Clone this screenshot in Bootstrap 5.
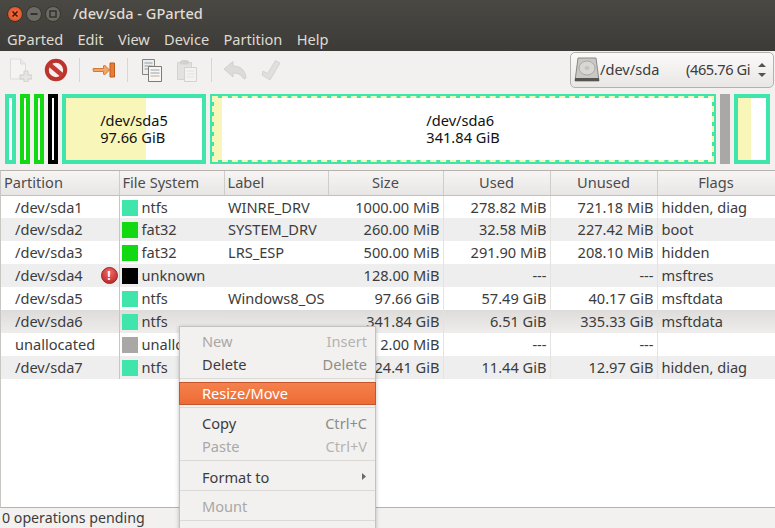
<!DOCTYPE html>
<html lang="en">
<head>
    <meta charset="UTF-8">
    <meta name="viewport" content="width=device-width, initial-scale=1.0">
    <title>/dev/sda - GParted</title>
    <link href="https://cdn.jsdelivr.net/npm/bootstrap@5.3.2/dist/css/bootstrap.min.css" rel="stylesheet">
    <style>
        html, body { height: 528px; overflow: hidden; }
        body { width: 775px; background: #f2f1f0; color: #3c3c3c; font-family: "Noto Sans", sans-serif; font-size: 14.6px; position: relative; }
        .app-top { background: linear-gradient(#4a4843, #3c3b37); color: #dfdbd2; }
        .title-row { height: 28px; padding-left: 7px; gap: 3px; }
        .win-btn { width: 16px; height: 16px; border-radius: 50%; background: #6d6a63; border: 1px solid #37352f; }
        .win-btn.win-close { background: radial-gradient(#f6764a, #d8491d); }
        .win-ico { display: block; }
        .win-title { margin-left: 9px; font-weight: 500; color: #e0dcd3; font-size: 14.6px; }
        .menu-row { height: 23px; padding-left: 7px; gap: 14.3px; color: #dfdbd2; font-size: 14.6px; line-height: 22px; }
        .tool-row { height: 37px; background: #f2f1f0; padding-left: 8px; gap: 11.5px; }
        .tool-ico { width: 24px; height: 24px; }
        .tool-sep { width: 1px; height: 24px; background: #d9d7d4; }
        .disk-pick { position: absolute; left: 570px; top: 52px; width: 204px; height: 36px; border: 1px solid #b5b2ac; border-radius: 5px; background: linear-gradient(#fbfafa, #e9e7e5); color: #3c3c3c; padding-left: 3px; white-space: nowrap; overflow: hidden; }
        .disk-size { position: absolute; left: 115px; letter-spacing: -.4px; }
        .disk-arrows { position: absolute; right: 0; top: 0; bottom: 0; width: 22px; }
        .map-row { height: 82px; padding: 6px 5px 0 5px; gap: 4px; background: #f2f1f0; }
        .part-box { height: 70px; border: 4px solid #40e5ac; background: #fff; position: relative; color: #111; line-height: 17px; font-size: 14.6px; }
        .part-box.is-green { border-color: #13d913; }
        .part-box.is-black { border-color: #000; }
        .part-box.is-free { border: 0; background: #a9a8a6; }
        .part-fill { position: absolute; left: 0; top: 0; bottom: 0; background: #f8f6b8; }
        .part-text { position: relative; padding-top: 14px; }
        .sel-dash { position: absolute; inset: -2px; border: 2px dashed #f8f6b8; }
        .list-wrap { height: 338px; background: #fff; border-top: 1px solid #b5b2ac; border-bottom: 1px solid #b5b2ac; border-left: 1px solid #c8c6c3; }
        .part-table { table-layout: fixed; width: 774px; margin: 0; font-size: 14.6px; color: #3c3c3c; }
        .part-table th { height: 24px; background: linear-gradient(#f6f5f4, #e8e6e4); font-weight: 400; color: #4c4c4c; padding: 0 0 3px 3px; border-right: 1px solid #cfcdca; border-bottom: 1px solid #c3c1be; line-height: 20px; }
        .part-table th.mid { text-align: center; padding: 0 0 3px; }
        .part-table td { height: 23px; padding: 0 3px 0 4px; line-height: 22px; border: 0; white-space: nowrap; overflow: hidden; background: transparent; }
        .part-table td.name { padding-left: 14px; border-right: 1px solid #c8c6c3; position: relative; overflow: visible; }
        .part-table td.num { text-align: right; border-right: 1px solid #e4e3e1; }
        .part-table tr.alt td { background: #eeeeee; }
        .part-table tr.sel td { background: linear-gradient(#dddcda, #eeedec); }
        .fs-swatch { display: inline-block; width: 16px; height: 16px; vertical-align: -3px; margin-right: 4px; margin-left: -2px; }
        .warn-dot { position: absolute; right: 1px; top: 3px; width: 17px; height: 17px; border-radius: 50%; background: radial-gradient(circle at 50% 30%, #f26a6a, #b01d1d); border: 1px solid #a82222; color: #fff; font-size: 12px; font-weight: 700; text-align: center; line-height: 15px; }
        .ctx-menu { position: absolute; left: 179px; top: 326px; width: 197px; height: 210px; padding-top: 3px; background: #f2f1f0; border: 1px solid #c4c2bf; box-shadow: 0 1px 4px rgba(0,0,0,.25); z-index: 5; }
        .ctx-item { height: 23px; padding: 0 8px 0 22px; line-height: 22px; color: #3c3c3c; white-space: nowrap; }
        .ctx-item.off { color: #a9a8a5; }
        .ctx-key { color: #8e8c88; }
        .ctx-item.off .ctx-key { color: #b5b3b0; }
        .ctx-line { height: 1px; background: #dcdad7; margin: 2px 0 4px; }
        .ctx-item.hot { background: linear-gradient(#f4814c, #ee6b35); color: #fff; border: 1px solid #c4552a; margin: -1px -1px 1px; padding-left: 22px; line-height: 21px; }
        .status-row { position: absolute; left: 0; right: 0; top: 508px; height: 20px; padding-left: 2px; line-height: 19px; font-size: 14.2px; background: #f2f1f0; color: #3c3c3c; }
    </style>
</head>
<body>
    <div class="app-top">
        <div class="title-row d-flex align-items-center">
            <span class="win-btn win-close"><svg class="win-ico" width="14" height="14" viewBox="0 0 14 14"><path d="M4.5 4.5l5 5M9.5 4.5l-5 5" stroke="#4a1606" stroke-width="1.6"/></svg></span>
            <span class="win-btn"><svg class="win-ico" width="14" height="14" viewBox="0 0 14 14"><path d="M3.5 7h7" stroke="#35332e" stroke-width="2"/></svg></span>
            <span class="win-btn"><svg class="win-ico" width="14" height="14" viewBox="0 0 14 14"><rect x="4" y="4" width="6" height="6" fill="none" stroke="#35332e" stroke-width="1.5"/></svg></span>
            <span class="win-title">/dev/sda - GParted</span>
        </div>
        <div class="menu-row d-flex">
            <span>GParted</span><span>Edit</span><span>View</span><span>Device</span><span>Partition</span><span>Help</span>
        </div>
    </div>

    <div class="tool-row d-flex align-items-center">
        <svg class="tool-ico" viewBox="0 0 24 24"><path d="M2.5 1h10l5 5v15h-15z" fill="#f4f4f3" stroke="#dedddb"/><path d="M12.5 1v5h5" fill="#e8e7e5" stroke="#dedddb"/><path d="M16 13h4v4h4v4h-4v3h-4v-3h-4v-4h4z" fill="#e6e5e3" stroke="#cfcecc"/></svg>
        <svg class="tool-ico" viewBox="0 0 24 24"><circle cx="12" cy="12" r="9.2" fill="#f7eeee" stroke="#bb332c" stroke-width="4"/><path d="M5.5 6.5l13 11" stroke="#c33a32" stroke-width="4.5"/></svg>
        <span class="tool-sep"></span>
        <svg class="tool-ico" viewBox="0 0 24 24"><path d="M1.5 10.5h10V8l1-1 5 5-5 5-1-1v-2.500h-10q-1-2 0-3.500z" fill="#f3a563" stroke="#cf7a36"/><path d="M18 5h4.500v14H18z" fill="#ea7d33" stroke="#bd5b1f"/></svg>
        <span class="tool-sep"></span>
        <svg class="tool-ico" viewBox="0 0 24 24"><path d="M2.500 1.500h12v15h-12z" fill="#ededec" stroke="#85847f"/><path d="M4.500 5h8M4.500 8h8M4.500 11h8" stroke="#8f9cb0"/><path d="M8.500 8.500h13v15h-13z" fill="#f6f6f5" stroke="#7c7b76"/><path d="M10.500 12h9M10.500 15h9" stroke="#9aa0a8"/><path d="M10.500 18h9" stroke="#c4a890"/></svg>
        <svg class="tool-ico" viewBox="0 0 24 24"><path d="M2.500 4.500h14v17h-14z" fill="#e3e2e0" stroke="#d3d2cf"/><path d="M6.500 2h6v1h1.500v3.500h-9V3h1.500z" fill="#d2d1ce"/><path d="M9.500 9.500h12v14h-12z" fill="#f4f3f2" stroke="#d3d2cf"/><path d="M11.500 13h8M11.500 16h8M11.500 19h8" stroke="#e3e2e0"/></svg>
        <span class="tool-sep"></span>
        <svg class="tool-ico" viewBox="0 0 24 24"><path d="M1 11l9-7.500v4.500c7 0 12 3.500 13 11.500 0 1.500-2 2-3 .5-2-3.500-5-5-10-5v4z" fill="#dcdbd9" stroke="#d2d1cf"/></svg>
        <svg class="tool-ico" viewBox="0 0 24 24"><path d="M4 13l4.500 2.500L16.500 2.500 21 5l-10 17-8-5z" fill="#e0dfdd" stroke="#d5d4d2"/></svg>
    </div>
    <div class="disk-pick d-flex align-items-center">
        <svg width="26" height="26" viewBox="0 0 26 26"><path d="M4 1h18l3 23H1z" fill="#c9c8c5" stroke="#8a8986"/><ellipse cx="13" cy="11" rx="8" ry="7" fill="#d8d7d4" stroke="#aaa9a6"/><ellipse cx="13" cy="11" rx="2.500" ry="2" fill="#c4c3c0"/><path d="M1 21h24v3H1z" fill="#55544f"/></svg>
        <span>/dev/sda</span>
        <span class="disk-size">(465.76 Gi</span>
        <span class="disk-arrows"><svg width="22" height="34" viewBox="0 0 22 34"><path d="M7 14l4-4 4 4zM7 20l4 4 4-4z" fill="#55534f"/></svg></span>
    </div>

    <div class="map-row d-flex">
        <div class="part-box" style="width:11px"></div>
        <div class="part-box is-green" style="width:10px"></div>
        <div class="part-box is-green" style="width:10px"></div>
        <div class="part-box is-black" style="width:10px"></div>
        <div class="part-box d-flex justify-content-center" style="width:144px">
            <div class="part-fill" style="width:80px"></div>
            <div class="part-text">/dev/sda5<br>97.66 GiB</div>
        </div>
        <div class="part-box d-flex justify-content-center" style="width:506px">
            <div class="part-fill" style="width:8px"></div>
            <div class="sel-dash"></div>
            <div class="part-text">/dev/sda6<br>341.84 GiB</div>
        </div>
        <div class="part-box is-free" style="width:10px"></div>
        <div class="part-box" style="width:36px">
            <div class="part-fill" style="width:13px"></div>
        </div>
    </div>

    <div class="list-wrap">
        <table class="table part-table">
            <colgroup>
                <col style="width:118px"><col style="width:105px"><col style="width:104px"><col style="width:115px"><col style="width:107px"><col style="width:107px"><col style="width:118px">
            </colgroup>
            <thead>
                <tr><th>Partition</th><th>File System</th><th>Label</th><th class="mid">Size</th><th class="mid">Used</th><th class="mid">Unused</th><th class="mid">Flags</th></tr>
            </thead>
            <tbody id="rows"></tbody>
        </table>
    </div>

    <div class="ctx-menu">
        <div class="ctx-item off d-flex justify-content-between"><span>New</span><span class="ctx-key">Insert</span></div>
        <div class="ctx-item d-flex justify-content-between"><span>Delete</span><span class="ctx-key">Delete</span></div>
        <div class="ctx-line"></div>
        <div class="ctx-item hot">Resize/Move</div>
        <div class="ctx-line"></div>
        <div class="ctx-item d-flex justify-content-between"><span>Copy</span><span class="ctx-key">Ctrl+C</span></div>
        <div class="ctx-item off d-flex justify-content-between"><span>Paste</span><span class="ctx-key">Ctrl+V</span></div>
        <div class="ctx-line"></div>
        <div class="ctx-item d-flex justify-content-between align-items-center"><span>Format to</span><svg width="5" height="7" viewBox="0 0 5 7"><path d="M0 0l4 3.500L0 7z" fill="#6b6a66"/></svg></div>
        <div class="ctx-line"></div>
        <div class="ctx-item off">Mount</div>
        <div class="ctx-line"></div>
    </div>

    <div class="status-row">0 operations pending</div>

    <script src="https://cdn.jsdelivr.net/npm/bootstrap@5.3.2/dist/js/bootstrap.bundle.min.js"></script>
    <script>
        const rows = [
            ['/dev/sda1', '#40e5ac', 'ntfs', 'WINRE_DRV', '1000.00 MiB', '278.82 MiB', '721.18 MiB', 'hidden, diag'],
            ['/dev/sda2', '#13d913', 'fat32', 'SYSTEM_DRV', '260.00 MiB', '32.58 MiB', '227.42 MiB', 'boot'],
            ['/dev/sda3', '#13d913', 'fat32', 'LRS_ESP', '500.00 MiB', '291.90 MiB', '208.10 MiB', 'hidden'],
            ['/dev/sda4', '#000', 'unknown', '', '128.00 MiB', '---', '---', 'msftres'],
            ['/dev/sda5', '#40e5ac', 'ntfs', 'Windows8_OS', '97.66 GiB', '57.49 GiB', '40.17 GiB', 'msftdata'],
            ['/dev/sda6', '#40e5ac', 'ntfs', '', '341.84 GiB', '6.51 GiB', '335.33 GiB', 'msftdata'],
            ['unallocated', '#a9a8a6', 'unallocated', '', '2.00 MiB', '---', '---', ''],
            ['/dev/sda7', '#40e5ac', 'ntfs', '', '24.41 GiB', '11.44 GiB', '12.97 GiB', 'hidden, diag']
        ];
        const tbody = document.getElementById('rows');
        rows.forEach((r, i) => {
            const tr = document.createElement('tr');
            if (i === 5) tr.className = 'sel';
            else if (i % 2 === 1) tr.className = 'alt';
            const warn = i === 3 ? '<span class="warn-dot">!</span>' : '';
            tr.innerHTML = `<td class="name">${r[0]}${warn}</td>` +
                `<td><span class="fs-swatch" style="background:${r[1]}"></span>${r[2]}</td>` +
                `<td>${r[3]}</td><td class="num">${r[4]}</td><td class="num">${r[5]}</td><td class="num">${r[6]}</td><td>${r[7]}</td>`;
            tbody.appendChild(tr);
        });
    </script>
</body>
</html>
